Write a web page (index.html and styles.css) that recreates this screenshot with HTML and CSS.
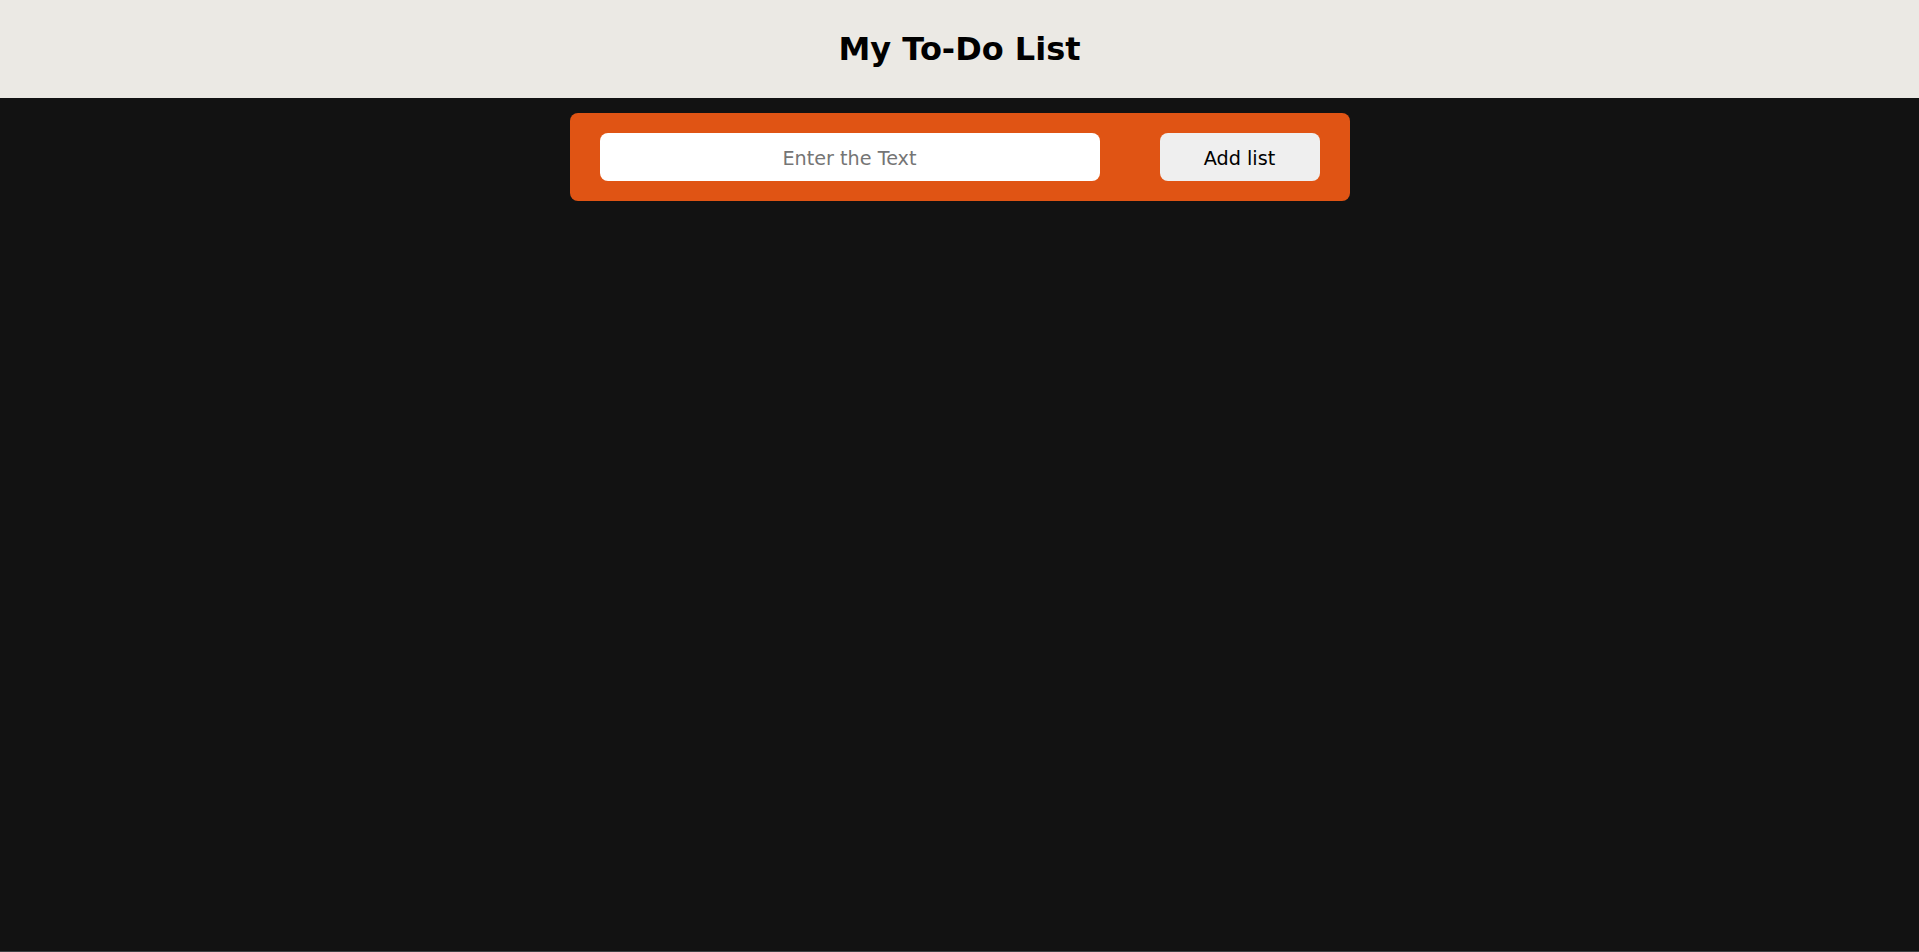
FILE: index.html
```html
<!DOCTYPE html>
<html lang="en">
<head>
<meta charset="utf-8">
<title>My To-Do List</title>
<link rel="stylesheet" href="styles.css">
</head>
<body>
<div class="page">
  <header class="header">
    <h1 class="title">My To-Do List</h1>
  </header>
  <main class="main">
    <form class="add-box" onsubmit="return false;">
      <input class="add-input" type="text" placeholder="Enter the Text">
      <button class="add-btn" type="button">Add list</button>
    </form>
  </main>
</div>
</body>
</html>
```

FILE: styles.css
```css
* { box-sizing: border-box; }
html, body { margin: 0; padding: 0; }
body {
  background: #121212;
  font-family: "DejaVu Sans", Verdana, sans-serif;
}
.page {
  min-height: 100vh;
  display: flex;
  flex-direction: column;
  border-bottom: 1px solid #3c4043;
}
.header {
  height: 98px;
  background: #ebe9e4;
  display: flex;
  align-items: center;
  justify-content: center;
}
.title {
  margin: 0;
  font-size: 32px;
  font-weight: bold;
  color: #000;
  line-height: 1;
}
.main {
  flex: 1;
  display: flex;
  justify-content: center;
  align-items: flex-start;
  padding-top: 15px;
}
.add-box {
  width: 780px;
  height: 88px;
  background: #e05414;
  border-radius: 8px;
  padding: 20px 30px;
  display: flex;
  gap: 60px;
  margin: 0;
}
.add-input {
  width: 500px;
  height: 48px;
  border: none;
  border-radius: 8px;
  background: #fff;
  font-family: "DejaVu Sans", Verdana, sans-serif;
  font-size: 19.2px;
  text-align: center;
  color: #000;
  outline: none;
  padding: 2px 10px 0;
}
.add-input::placeholder { color: #757575; }
.add-btn {
  width: 160px;
  height: 48px;
  border: none;
  border-radius: 8px;
  background: #efefef;
  color: #000;
  font-family: "DejaVu Sans", Verdana, sans-serif;
  font-size: 19.2px;
  cursor: pointer;
  padding: 2px 0 0;
}
```
